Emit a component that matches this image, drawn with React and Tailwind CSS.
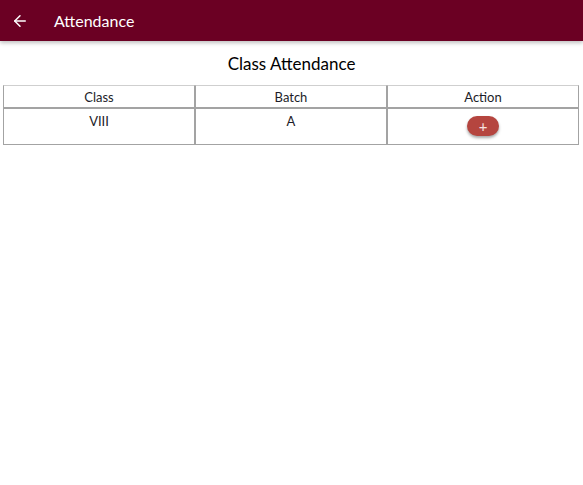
import { ArrowLeft } from 'lucide-react';

const rows = [{ cls: 'VIII', batch: 'A' }];

export default function App() {
  return (
    <div className="min-h-[485px] bg-white font-['Lato',sans-serif] text-[#222]">
      <header className="flex h-[41px] items-center bg-[#6b0023] shadow-[0_2px_4px_rgba(0,0,0,0.25)]">
        <ArrowLeft size={18} strokeWidth={2} className="ml-[11px] text-white" />
        <span className="ml-[25px] text-[16px] text-white">Attendance</span>
      </header>

      <h1 className="mt-[11px] text-center text-[17px] leading-[24px] text-black">Class Attendance</h1>

      {/* Table */}
      <div className="ml-[3px] mt-[9px] w-[576px]">
        <div className="grid grid-cols-3">
          {['Class', 'Batch', 'Action'].map((h) => (
            <div
              key={h}
              className="h-[23px] border border-[#a3a3a3] border-t-[#cfcfcf] pt-[1px] text-center text-[13px] leading-[21px] text-[#1c1c28]"
            >
              {h}
            </div>
          ))}
        </div>
        {rows.map((r) => (
          <div key={r.cls} className="grid grid-cols-3">
            <div className="h-[37px] border border-[#a3a3a3] pt-[4px] text-center text-[13px] leading-[16px] text-[#1c1c28]">
              {r.cls}
            </div>
            <div className="h-[37px] border border-[#a3a3a3] pt-[4px] text-center text-[13px] leading-[16px] text-[#1c1c28]">
              {r.batch}
            </div>
            <div className="flex h-[37px] justify-center border border-[#a3a3a3] pt-[7px]">
              <button className="flex h-[20px] w-[32px] items-center justify-center rounded-full bg-[#b5453f] text-[15px] leading-none text-[#f6e2e0] shadow-[0_2px_3px_rgba(0,0,0,0.35)]">
                +
              </button>
            </div>
          </div>
        ))}
      </div>
    </div>
  );
}
